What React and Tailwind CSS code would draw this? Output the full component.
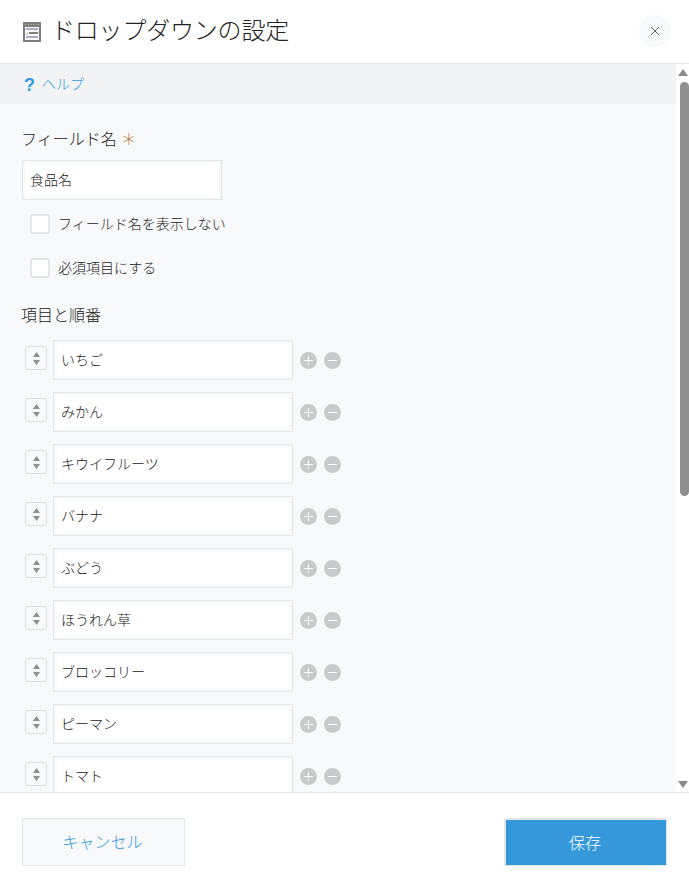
import React from "react";

const FONT = "font-['Noto_Sans_CJK_JP','Noto_Sans',sans-serif]";
const ITEMS = ["いちご", "みかん", "キウイフルーツ", "バナナ", "ぶどう", "ほうれん草", "ブロッコリー", "ピーマン", "トマト"];
const INPUT = "border border-[#e3e7e8] bg-white shadow-[inset_2px_2px_2px_#f7f8f9,inset_-2px_-2px_2px_#f7f8f9] flex items-center pl-[7px] pr-2 pb-[2px] text-sm font-light text-[#222]";

function FormIcon() {
  return (
    <svg width="18" height="20" viewBox="0 0 18 20" className="shrink-0">
      <rect width="18" height="20" fill="#7d7d7d" />
      <path d="M2.5 2.5h1M5 2.5h1M7.5 2.5h1M10 2.5h1M12.5 2.5h1M15 2.5h1" stroke="#b5b5b5" strokeWidth="1" />
      <rect x="2" y="5" width="14" height="13" fill="#fff" />
      <rect x="3" y="6" width="12" height="2" fill="#a9adc4" />
      <rect x="6" y="10" width="9" height="2" fill="#7d7d7d" />
      <rect x="3" y="14" width="12" height="2" fill="#a9adc4" />
      <path d="M3 11.5l1 .8 1-1.8" stroke="#9a9a9a" strokeWidth="0.8" fill="none" />
    </svg>
  );
}

function Sorter() {
  return (
    <div className="w-[22px] h-6 mt-1.5 rounded-[3px] border border-[#dcdedf] bg-[#f7f9fa] flex flex-col items-center justify-center gap-[3px]">
      <svg width="7" height="5" viewBox="0 0 7 5"><path d="M3.5 0l3.5 5H0z" fill="#8f8f8f" /></svg>
      <svg width="7" height="5" viewBox="0 0 7 5"><path d="M3.5 5l3.5-5H0z" fill="#8f8f8f" /></svg>
    </div>
  );
}

function RoundBtn({ plus }) {
  return (
    <svg width="17" height="17" viewBox="0 0 17 17">
      <circle cx="8.5" cy="8.5" r="8.5" fill="#c8c9cb" />
      <path d={plus ? "M4 8.5h9M8.5 4v9" : "M4 8.5h9"} stroke="#fff" strokeWidth="1" />
    </svg>
  );
}

function Row({ label }) {
  return (
    <div className="flex items-start h-10 shrink-0">
      <Sorter />
      <div className={`${INPUT} w-60 h-10 ml-1.5 shrink-0`}>{label}</div>
      <div className="flex gap-[7px] ml-[7px] mt-3">
        <RoundBtn plus />
        <RoundBtn />
      </div>
    </div>
  );
}

function Check({ label, className }) {
  return (
    <div className={`flex items-center h-5 ml-2 ${className}`}>
      <div className="w-5 h-5 rounded-[3px] border-2 border-[#e3e7e8] bg-white shrink-0" />
      <span className="ml-2 pb-[2px] text-sm font-light text-[#222]">{label}</span>
    </div>
  );
}

export default function App() {
  return (
    <div className={`${FONT} w-[689px] h-[887px] bg-white flex flex-col overflow-hidden`}>
      <header className="h-16 shrink-0 border-b border-[#e3e7e8] flex items-center pl-[23px] pr-[17px]">
        <FormIcon />
        <h1 className="ml-[10px] text-2xl text-[#222] font-light leading-8 -mt-[5px] tracking-[-0.2px]">ドロップダウンの設定</h1>
        <button className="ml-auto w-8 h-8 rounded-full bg-[#f7f9fa] flex items-center justify-center -mt-[1px] -translate-x-px">
          <svg width="10" height="10" viewBox="0 0 10 10"><path d="M1 1l8 8M9 1l-8 8" stroke="#666" strokeWidth="1" /></svg>
        </button>
      </header>

      <div className="flex h-[728px] shrink-0 overflow-hidden">
        <main className="w-[676px] shrink-0 bg-[#f7f9fa] flex flex-col overflow-hidden">
          <div className="h-10 shrink-0 bg-[#f1f3f5] flex items-center pl-6 text-sm font-light text-[#3498db]">
            <span className="font-['Liberation_Sans',sans-serif] font-bold text-lg w-[18px] mt-[1px]">?</span>
            <span className="pb-[2px]">ヘルプ</span>
          </div>
          <div className="pl-[22px] pt-[23px] flex flex-col">
            <div className="h-6 leading-6 text-base font-light text-[#222] -translate-y-px -translate-x-px flex items-start">
              フィールド名<span className="text-[#bd8248] ml-1">＊</span>
            </div>
            <div className={`${INPUT} w-[200px] h-10 mt-[9px]`}>食品名</div>
            <Check label="フィールド名を表示しない" className="mt-3.5" />
            <Check label="必須項目にする" className="mt-6" />
            <div className="h-6 leading-6 text-base font-light text-[#222] mt-[25px] -translate-y-px -translate-x-px">項目と順番</div>
            <div className="flex flex-col gap-3 mt-[13px] pl-[3px]">
              {ITEMS.map((t) => <Row key={t} label={t} />)}
            </div>
          </div>
        </main>
        <aside className="w-[13px] shrink-0 bg-white flex flex-col items-center">
          <svg width="10" height="7" viewBox="0 0 10 7" className="mt-[5px] shrink-0"><path d="M5 0l5 7H0z" fill="#8a8a8a" /></svg>
          <div className="w-[9px] h-[414px] mt-[6px] ml-[3px] rounded-full bg-[#8f8f8f] shrink-0" />
          <svg width="10" height="7" viewBox="0 0 10 7" className="mt-auto mb-[4px] shrink-0"><path d="M5 7l5-7H0z" fill="#8a8a8a" /></svg>
        </aside>
      </div>

      <footer className="flex-1 border-t border-[#e3e7e8] bg-white flex items-start justify-between pl-[22px] pr-[22px] pt-[25px]">
        <button className="w-[163px] h-12 border border-[#e3e7e8] bg-[#f7f9fa] text-base font-light text-[#3498db] pb-[2px] pr-[2px]">キャンセル</button>
        <button className="w-[163px] h-12 border-t-2 border-l-2 border-r border-b border-[#e3e7e8] bg-[#3498db] text-base font-light text-white pb-[2px] pr-[2px]">保存</button>
      </footer>
    </div>
  );
}
